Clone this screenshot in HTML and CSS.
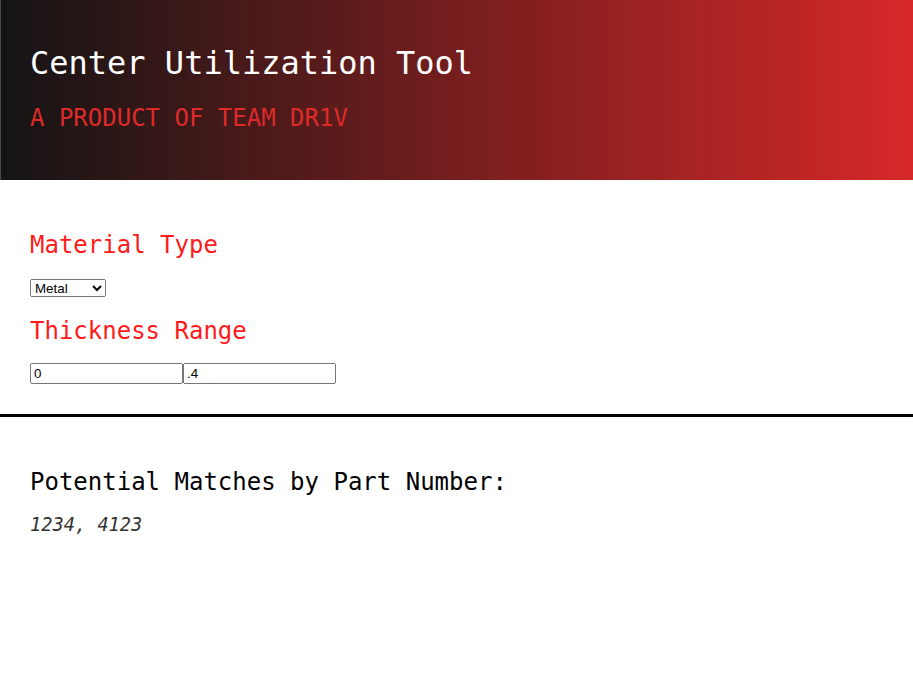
FILE: index.html
```html
<!DOCTYPE html>
<html>
<head>
<meta charset="utf-8">
<title>Center Utilization Tool</title>
<link rel="stylesheet" href="styles.css">
</head>
<body>
<header class="hero">
  <h1 class="title">Center Utilization Tool</h1>
  <p class="subtitle">A PRODUCT OF TEAM DR1V</p>
</header>
<section class="filters">
  <h2 class="label">Material Type</h2>
  <select class="material">
    <option>Metal</option>
    <option>Plastic</option>
    <option>Wood</option>
  </select>
  <h2 class="label label-second">Thickness Range</h2>
  <div class="range">
    <input type="text" value="0"><input type="text" value=".4">
  </div>
</section>
<hr class="divider">
<section class="results">
  <h3 class="results-title">Potential Matches by Part Number:</h3>
  <p class="results-list">1234, 4123</p>
</section>
</body>
</html>
```
FILE: styles.css
```css
html, body {
  margin: 0;
  padding: 0;
  background: #ffffff;
}
body {
  font-family: "DejaVu Sans Mono", monospace;
}
.hero {
  box-sizing: border-box;
  height: 180px;
  padding: 45px 30px 0 30px;
  background: linear-gradient(to right, #141414 0%, #d62828 100%);
  border-left: 1px solid #4a4a4a;
}
.title {
  margin: 0 0 0 -1px;
  font-size: 32px;
  font-weight: normal;
  line-height: 37px;
  color: #ffffff;
}
.subtitle {
  margin: 22px 0 0 -1px;
  font-size: 24px;
  line-height: 28px;
  color: #df2a2a;
}
.filters {
  padding: 51px 30px 30px 30px;
}
.label {
  margin: 0;
  font-size: 24px;
  font-weight: normal;
  line-height: 28px;
  color: #ff1a1a;
}
.label-second {
  margin-top: 20px;
}
.material {
  display: block;
  margin-top: 20px;
  width: 76px;
  height: 18px;
  font-family: Arial, "Liberation Sans", sans-serif;
  font-size: 13.33px;
}
.range {
  display: flex;
  margin-top: 18px;
}
.range input {
  width: 153px;
  height: 21px;
  box-sizing: border-box;
  margin: 0;
  font-family: Arial, "Liberation Sans", sans-serif;
  font-size: 13.33px;
}
.divider {
  margin: 0;
  border: 0;
  height: 3px;
  background: #000000;
}
.results {
  padding: 51px 30px 0 30px;
}
.results-title {
  margin: 0;
  font-size: 24px;
  font-weight: normal;
  line-height: 28px;
  color: #000000;
}
.results-list {
  margin: 18px 0 0 0;
  font-size: 18.67px;
  font-style: italic;
  color: #333333;
}
```
